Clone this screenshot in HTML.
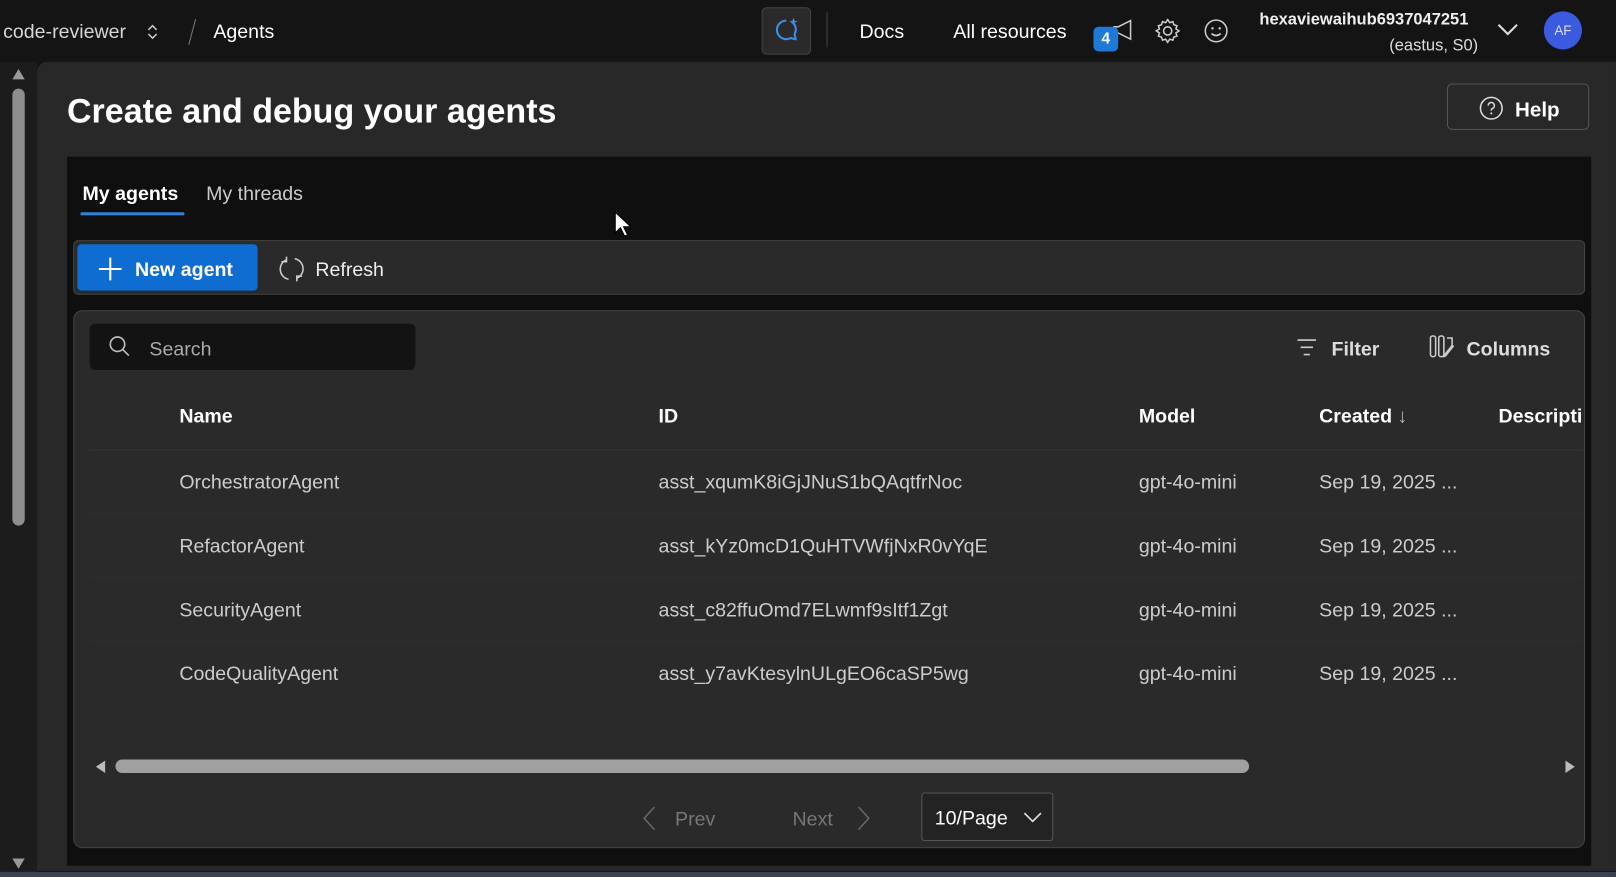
<!DOCTYPE html>
<html><head><meta charset="utf-8"><style>
html,body{margin:0;padding:0;width:1616px;height:877px;overflow:hidden;background:#141414;}
#w{position:absolute;left:0;top:0;width:1568px;height:851px;transform:scale(1.0306);transform-origin:0 0;font-family:"Liberation Sans",sans-serif;color:#fff;background:#141414;}
.a{position:absolute;}
.t{position:absolute;white-space:nowrap;margin-top:2px;}
</style></head><body><div id="w">
<div class="t" style="left:3px;top:19px;font-size:19px;color:#d6d6d6">code-reviewer</div>
<svg class="a" style="left:141px;top:21px" width="14" height="20" viewBox="0 0 14 20"><path d="M3 8l4-4 4 4M3 12l4 4 4-4" stroke="#ccc" stroke-width="1.5" fill="none"/></svg>
<div class="a" style="left:186px;top:18px;width:1px;height:26px;background:#777;transform:rotate(15deg)"></div>
<div class="t" style="left:207px;top:19px;font-size:19px;color:#fff">Agents</div>
<div class="a" style="left:739px;top:7px;width:46px;height:44px;border:1px solid #444;border-radius:5px;background:#2a2a2a"></div>
<svg class="a" style="left:749px;top:15px" width="28" height="28" viewBox="0 0 28 28"><path d="M14 5a9 9 0 1 0 4 17l5 1-1-5a9 9 0 0 0-3-12" stroke="#3b8eea" stroke-width="2" fill="none"/><path d="M21 2l1 3 3 1-3 1-1 3-1-3-3-1 3-1z" fill="#3b8eea"/></svg>
<div class="a" style="left:802px;top:12px;width:1px;height:34px;background:#444"></div>
<div class="t" style="left:834px;top:19px;font-size:19px">Docs</div>
<div class="t" style="left:925px;top:19px;font-size:19px">All resources</div>
<svg class="a" style="left:1078px;top:17px" width="24" height="24" viewBox="0 0 24 24"><path d="M3 9h4l12-6v18L7 15H3z" stroke="#ccc" stroke-width="1.5" fill="none"/></svg>
<div class="a" style="left:1061px;top:26px;width:24px;height:24px;border-radius:5px;background:#1f7ad6;font-size:15px;font-weight:bold;text-align:center;line-height:24px">4</div>
<svg class="a" style="left:1120px;top:17px" width="26" height="26" viewBox="0 0 26 26"><circle cx="13" cy="13" r="4" stroke="#ccc" stroke-width="1.5" fill="none"/><path d="M13 2l2 3 3-1 1 3 3 1-1 3 3 2-3 2 1 3-3 1-1 3-3-1-2 3-2-3-3 1-1-3-3-1 1-3-3-2 3-2-1-3 3-1 1-3 3 1z" stroke="#ccc" stroke-width="1.5" fill="none"/></svg>
<svg class="a" style="left:1167px;top:17px" width="26" height="26" viewBox="0 0 26 26"><circle cx="13" cy="13" r="10.5" stroke="#ccc" stroke-width="1.5" fill="none"/><circle cx="9.5" cy="10.5" r="1.2" fill="#ccc"/><circle cx="16.5" cy="10.5" r="1.2" fill="#ccc"/><path d="M8.5 15.5q4.5 4 9 0" stroke="#ccc" stroke-width="1.5" fill="none"/></svg>
<div class="t" style="left:1222px;top:9px;font-size:16px;font-weight:bold;color:#eee">hexaviewaihub6937047251</div>
<div class="t" style="left:1348px;top:34px;font-size:16px;color:#ddd">(eastus, S0)</div>
<svg class="a" style="left:1452px;top:20px" width="22" height="16" viewBox="0 0 22 16"><path d="M2 4l9 9 9-9" stroke="#ddd" stroke-width="2" fill="none"/></svg>
<div class="a" style="left:1498px;top:11px;width:37px;height:37px;border-radius:50%;background:#3a5be0;font-size:13px;text-align:center;line-height:37px;color:#dde">AF</div>
<div class="a" style="left:0;top:60px;width:36px;height:791px;background:#1c1c1c"></div>
<svg class="a" style="left:11px;top:66px" width="14" height="12"><path d="M1 11L7 1l6 10z" fill="#999"/></svg>
<div class="a" style="left:12px;top:86px;width:12px;height:424px;border-radius:6px;background:#8e8e8e"></div>
<svg class="a" style="left:11px;top:832px" width="14" height="12"><path d="M1 1h12L7 11z" fill="#999"/></svg>
<div class="a" style="left:36px;top:60px;width:1532px;height:785px;background:#282828;border-radius:10px 0 0 0"></div>
<div class="t" style="left:65px;top:87px;font-size:33px;font-weight:bold;color:#fff">Create and debug your agents</div>
<div class="a" style="left:1404px;top:81px;width:138px;height:45px;border:1px solid #555;border-radius:5px;box-sizing:border-box"></div>
<svg class="a" style="left:1435px;top:93px" width="24" height="24" viewBox="0 0 24 24"><circle cx="12" cy="12" r="10.5" stroke="#ddd" stroke-width="1.5" fill="none"/><path d="M9 9.5a3 3 0 1 1 4 2.8c-.8.4-1 1-1 2" stroke="#ddd" stroke-width="1.5" fill="none"/><circle cx="12" cy="17" r="1" fill="#ddd"/></svg>
<div class="t" style="left:1470px;top:94px;font-size:20px;font-weight:bold">Help</div>
<div class="a" style="left:65px;top:152px;width:1479px;height:688px;background:#0f0f0f"></div>
<div class="t" style="left:80px;top:176px;font-size:19px;font-weight:bold">My agents</div>
<div class="a" style="left:78px;top:206px;width:101px;height:3px;border-radius:2px;background:#2f80d8"></div>
<div class="t" style="left:200px;top:176px;font-size:19px;color:#ccc">My threads</div>
<svg class="a" style="left:596px;top:205px" width="18" height="26" viewBox="0 0 18 26"><path d="M1 1v20l5-5 4 8 3-1-4-8h7z" fill="#fff" stroke="#000" stroke-width="1"/></svg>
<div class="a" style="left:71px;top:233px;width:1467px;height:53px;background:#2a2a2a;border:1px solid #444;border-radius:5px;box-sizing:border-box"></div>
<div class="a" style="left:75px;top:237px;width:175px;height:45px;background:#0f6cd0;border-radius:4px"></div>
<svg class="a" style="left:94px;top:248px" width="26" height="26"><path d="M13 2v22M2 13h22" stroke="#fff" stroke-width="2"/></svg>
<div class="t" style="left:131px;top:250px;font-size:19px;font-weight:bold">New agent</div>
<svg class="a" style="left:270px;top:247px" width="26" height="28" viewBox="0 0 26 28"><path d="M8 5a10 10 0 0 0 2 19M18 23a10 10 0 0 0-2-19M8 2v5H3M18 26v-5h5" stroke="#ccc" stroke-width="1.5" fill="none"/></svg>
<div class="t" style="left:306px;top:250px;font-size:19px;color:#eee">Refresh</div>
<div class="a" style="left:71px;top:301px;width:1467px;height:522px;background:#2a2a2a;border:1px solid #444;border-radius:9px;box-sizing:border-box"></div>
<div class="a" style="left:87px;top:314px;width:316px;height:45px;background:#131313;border-radius:5px"></div>
<svg class="a" style="left:104px;top:324px" width="24" height="24"><circle cx="10" cy="10" r="7" stroke="#bbb" stroke-width="1.6" fill="none"/><path d="M15 15l6 6" stroke="#bbb" stroke-width="1.6"/></svg>
<div class="t" style="left:145px;top:327px;font-size:19px;color:#aaa">Search</div>
<svg class="a" style="left:1257px;top:327px" width="22" height="20"><path d="M2 3h18M5 10h12M8 17h6" stroke="#ccc" stroke-width="1.6"/></svg>
<div class="t" style="left:1292px;top:327px;font-size:19px;font-weight:bold;color:#ddd">Filter</div>
<svg class="a" style="left:1386px;top:324px" width="28" height="26" viewBox="0 0 28 26"><rect x="2" y="2" width="5" height="20" rx="2" stroke="#ccc" stroke-width="1.5" fill="none"/><rect x="10" y="2" width="5" height="20" rx="2" stroke="#ccc" stroke-width="1.5" fill="none"/><path d="M18 4h5v8" stroke="#ccc" stroke-width="1.5" fill="none"/><path d="M25 12l-8 10-3 1 1-3 8-10z" fill="#ccc"/></svg>
<div class="t" style="left:1423px;top:327px;font-size:19px;font-weight:bold;color:#ddd">Columns</div>
<div class="t" style="left:174px;top:392px;font-size:19px;font-weight:bold">Name</div>
<div class="t" style="left:639px;top:392px;font-size:19px;font-weight:bold">ID</div>
<div class="t" style="left:1105px;top:392px;font-size:19px;font-weight:bold">Model</div>
<div class="t" style="left:1280px;top:392px;font-size:19px;font-weight:bold">Created <span style="font-weight:normal;color:#bbb">↓</span></div>
<div class="a" style="left:1454px;top:394px;width:82px;overflow:hidden;white-space:nowrap;font-size:19px;font-weight:bold">Description</div>
<div class="a" style="left:87px;top:436px;width:1449px;height:1px;background:#333"></div>
<div style="position:absolute;left:0;top:0;font-size:19px;color:#ccc">
<div class="t" style="left:174px;top:456px">OrchestratorAgent</div><div class="t" style="left:639px;top:456px">asst_xqumK8iGjJNuS1bQAqtfrNoc</div><div class="t" style="left:1105px;top:456px">gpt-4o-mini</div><div class="t" style="left:1280px;top:456px">Sep 19, 2025 ...</div>
<div class="t" style="left:174px;top:518px">RefactorAgent</div><div class="t" style="left:639px;top:518px">asst_kYz0mcD1QuHTVWfjNxR0vYqE</div><div class="t" style="left:1105px;top:518px">gpt-4o-mini</div><div class="t" style="left:1280px;top:518px">Sep 19, 2025 ...</div>
<div class="t" style="left:174px;top:580px">SecurityAgent</div><div class="t" style="left:639px;top:580px">asst_c82ffuOmd7ELwmf9sItf1Zgt</div><div class="t" style="left:1105px;top:580px">gpt-4o-mini</div><div class="t" style="left:1280px;top:580px">Sep 19, 2025 ...</div>
<div class="t" style="left:174px;top:642px">CodeQualityAgent</div><div class="t" style="left:639px;top:642px">asst_y7avKtesylnULgEO6caSP5wg</div><div class="t" style="left:1105px;top:642px">gpt-4o-mini</div><div class="t" style="left:1280px;top:642px">Sep 19, 2025 ...</div>
</div>
<div class="a" style="left:87px;top:498px;width:1449px;height:1px;background:#2f2f2f"></div>
<div class="a" style="left:87px;top:560px;width:1449px;height:1px;background:#2f2f2f"></div>
<div class="a" style="left:87px;top:622px;width:1449px;height:1px;background:#2f2f2f"></div>
<svg class="a" style="left:91px;top:737px" width="12" height="14"><path d="M11 1v12L2 7z" fill="#bbb"/></svg>
<div class="a" style="left:112px;top:737px;width:1100px;height:13px;border-radius:7px;background:#a0a0a0"></div>
<svg class="a" style="left:1518px;top:737px" width="12" height="14"><path d="M1 1v12l9-6z" fill="#bbb"/></svg>
<svg class="a" style="left:622px;top:781px" width="16" height="26"><path d="M13 2L3 13l10 11" stroke="#666" stroke-width="1.5" fill="none"/></svg>
<div class="t" style="left:655px;top:783px;font-size:19px;color:#777">Prev</div>
<div class="t" style="left:769px;top:783px;font-size:19px;color:#777">Next</div>
<svg class="a" style="left:830px;top:781px" width="16" height="26"><path d="M3 2l10 11L3 24" stroke="#666" stroke-width="1.5" fill="none"/></svg>
<div class="a" style="left:894px;top:769px;width:128px;height:47px;border:1px solid #555;border-radius:3px;box-sizing:border-box;background:#232323"></div>
<div class="t" style="left:907px;top:782px;font-size:19px;color:#fff">10/Page</div>
<svg class="a" style="left:992px;top:786px" width="20" height="14"><path d="M2 3l8 8 8-8" stroke="#ddd" stroke-width="1.6" fill="none"/></svg>
<div class="a" style="left:0;top:846px;width:1568px;height:5px;background:#3a4150"></div>
</div></body></html>
